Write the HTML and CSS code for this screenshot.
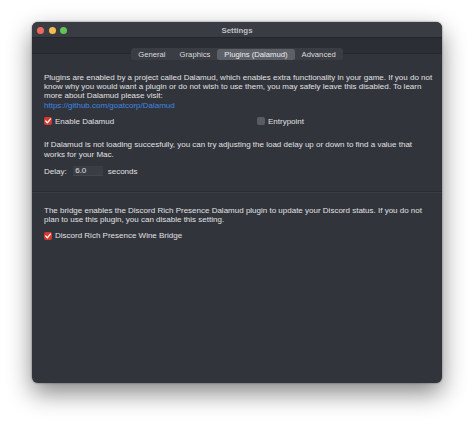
FILE: index.html
```html
<!DOCTYPE html>
<html>
<head>
<meta charset="utf-8">
<link rel="stylesheet" href="styles.css">
</head>
<body>
<div class="stage">
  <div class="window">
    <div class="titlebar">
      <div class="lights">
        <span class="light red"></span>
        <span class="light yellow"></span>
        <span class="light green"></span>
      </div>
      <div class="title">Settings</div>
      <div></div>
    </div>
    <div class="toolbar">
      <div class="segmented">
        <span class="seg">General</span>
        <span class="seg">Graphics</span>
        <span class="seg selected">Plugins (Dalamud)</span>
        <span class="seg">Advanced</span>
      </div>
    </div>
    <div class="section first">
      <p class="para">Plugins are enabled by a project called Dalamud, which enables extra functionality in your game. If you do not<br>know why you would want a plugin or do not wish to use them, you may safely leave this disabled. To learn<br>more about Dalamud please visit:<br><a class="link">https://github.com/goatcorp/Dalamud</a></p>
      <div class="check-grid">
        <div class="check">
          <span class="box on"><svg viewBox="0 0 10 10" width="8" height="8"><path d="M2.2 5.1 L4.2 7.3 L7.9 2.6" fill="none" stroke="#fff" stroke-width="1.7" stroke-linecap="round" stroke-linejoin="round"/></svg></span>
          <span>Enable Dalamud</span>
        </div>
        <div class="check">
          <span class="box off"></span>
          <span>Entrypoint</span>
        </div>
      </div>
      <p class="para gap-lg">If Dalamud is not loading succesfully, you can try adjusting the load delay up or down to find a value that<br>works for your Mac.</p>
      <div class="delay">
        <span>Delay:</span>
        <span class="field">6.0</span>
        <span>seconds</span>
      </div>
    </div>
    <div class="separator"></div>
    <div class="section second">
      <p class="para">The bridge enables the Discord Rich Presence Dalamud plugin to update your Discord status. If you do not<br>plan to use this plugin, you can disable this setting.</p>
      <div class="check-grid">
        <div class="check">
          <span class="box on"><svg viewBox="0 0 10 10" width="8" height="8"><path d="M2.2 5.1 L4.2 7.3 L7.9 2.6" fill="none" stroke="#fff" stroke-width="1.7" stroke-linecap="round" stroke-linejoin="round"/></svg></span>
          <span>Discord Rich Presence Wine Bridge</span>
        </div>
      </div>
    </div>
  </div>
</div>
</body>
</html>
```

FILE: styles.css
```css
* { box-sizing: border-box; }

html, body {
  margin: 0;
  padding: 0;
  background: #ffffff;
}

body {
  width: 474px;
  height: 426px;
  overflow: hidden;
  font-family: "Liberation Sans", Arial, sans-serif;
  font-size: 8px;
  color: #e0e0e2;
}

.stage {
  padding: 22px 0 0 32px;
}

.window {
  width: 410px;
  height: 361px;
  border-radius: 6px;
  overflow: hidden;
  background: #31343b;
  box-shadow: 0 10px 24px rgba(0, 0, 0, 0.48), 0 0 2px rgba(0, 0, 0, 0.55);
}

.titlebar {
  height: 16px;
  display: grid;
  grid-template-columns: 1fr auto 1fr;
  align-items: center;
  background: #393c43;
  border-bottom: 1px solid #24262b;
}

.lights {
  display: flex;
  gap: 4.5px;
  padding-left: 5px;
  padding-top: 1px;
}

.light {
  width: 7px;
  height: 7px;
  border-radius: 50%;
}

.light.red { background: #ee6a5f; }
.light.yellow { background: #f5be4f; }
.light.green { background: #61c454; }

.title {
  font-weight: bold;
  color: #bfc0c3;
  font-size: 7.9px;
  padding-top: 1px;
}

.toolbar {
  height: 16px;
  display: flex;
  justify-content: center;
  align-items: flex-end;
  background: #2b2e34;
  border-bottom: 1px solid #26282d;
}

.segmented {
  display: flex;
  height: 12px;
  margin-bottom: -7px;
  padding: 0.5px;
  border-radius: 3px;
  background: #3a3d44;
  position: relative;
  z-index: 1;
}

.seg {
  display: flex;
  align-items: center;
  padding: 0 7px;
  border-radius: 2.5px;
  font-size: 7.7px;
  color: #dcdcde;
}

.seg.selected {
  background: #5d6067;
  color: #ececee;
}

.section {
  padding: 0 12px;
}

.section.first {
  padding-top: 19px;
}

.section.second {
  padding-top: 13px;
}

.para {
  margin: 0;
  line-height: 9.2px;
  white-space: nowrap;
}

.para.gap-lg {
  margin-top: 14.4px;
}

.link {
  color: #3e86e2;
}

.check-grid {
  display: grid;
  grid-template-columns: 213px 1fr;
  margin-top: 6.2px;
}

.check {
  display: flex;
  align-items: center;
  gap: 3px;
  height: 10px;
}

.box {
  width: 8px;
  height: 8px;
  border-radius: 2px;
  display: flex;
  align-items: center;
  justify-content: center;
}

.box.on {
  background: #d6382f;
}

.box.off {
  background: #595c62;
}

.delay {
  display: flex;
  align-items: center;
  height: 10px;
  margin-top: 7.4px;
}

.field {
  width: 30px;
  height: 10px;
  margin: 0 4.5px 0 6.5px;
  padding-left: 2px;
  display: flex;
  align-items: center;
  background: #3a3d44;
  border-bottom: 0.5px solid #43464d;
}

.separator {
  height: 2px;
  margin-top: 15px;
  border-top: 1px solid #2a2c32;
  border-bottom: 1px solid #393c43;
}
```
